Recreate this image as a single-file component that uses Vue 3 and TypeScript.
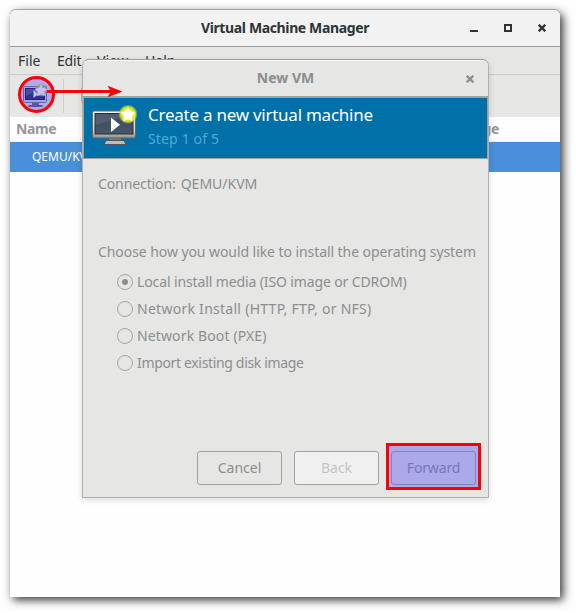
<script setup lang="ts">
interface Option {
  label: string
  cls: string
}

const menus: string[] = ['File', 'Edit', 'View', 'Help']
const options: Option[] = [
  { label: 'Local install media (ISO image or CDROM)', cls: 'local' },
  { label: 'Network Install (HTTP, FTP, or NFS)', cls: 'net' },
  { label: 'Network Boot (PXE)', cls: 'pxe' },
  { label: 'Import existing disk image', cls: 'import' },
]
const selected = 0
</script>

<template>
  <div class="page">
    <main class="window">
      <header class="titlebar">
        <h1>Virtual Machine Manager</h1>
        <div class="controls">
          <svg width="8" height="8" viewBox="0 0 8 8"><path d="M0 6h8v2H0z" fill="#2e3436" /></svg>
          <svg width="8" height="8" viewBox="0 0 8 8"><path d="M1 1h6v6H1z" fill="none" stroke="#2e3436" stroke-width="2" /></svg>
          <svg width="8" height="8" viewBox="0 0 8 8"><path d="M.7.7l6.6 6.6M7.3.7L.7 7.3" stroke="#2e3436" stroke-width="2.3" /></svg>
        </div>
      </header>
      <nav class="menubar">
        <span v-for="m in menus" :key="m" :class="m.toLowerCase()">{{ m }}</span>
      </nav>
      <div class="toolbar">
        <span class="sep"></span>
        <span class="tool-edge"></span>
      </div>
      <div class="columns"><span class="name">Name</span><span class="usage">CPU usage</span></div>
      <div class="row">QEMU/KVM</div>
    </main>

    <section class="dialog">
      <header class="dialog-title">
        <h2>New VM</h2>
        <svg width="8" height="8" viewBox="0 0 8 8"><path d="M.7.7l6.6 6.6M7.3.7L.7 7.3" stroke="#8b8e8f" stroke-width="2.3" /></svg>
      </header>
      <div class="banner">
        <svg class="monitor" width="54" height="48" viewBox="0 0 54 48">
          <defs>
            <linearGradient id="frame" x1="0" y1="0" x2="0" y2="1">
              <stop offset="0" stop-color="#f4f4f4" /><stop offset=".75" stop-color="#d2d2d0" /><stop offset="1" stop-color="#8c8c8a" />
            </linearGradient>
            <linearGradient id="screen" x1="0" y1="0" x2="0" y2="1">
              <stop offset="0" stop-color="#3d4a5c" /><stop offset="1" stop-color="#48566a" />
            </linearGradient>
            <radialGradient id="glow">
              <stop offset=".5" stop-color="#f4fb20" /><stop offset=".78" stop-color="#d8e820" stop-opacity=".85" /><stop offset="1" stop-color="#b0d040" stop-opacity="0" />
            </radialGradient>
          </defs>
          <path d="M17 35h12v4H17z" fill="#777" />
          <path d="M14 38.500h18l2 4H12z" fill="#bdbdbb" stroke="#555" stroke-width="1" />
          <rect x=".5" y="9" width="43" height="27" rx="1.8" fill="url(#frame)" stroke="#666" />
          <rect x="3" y="11.5" width="38" height="20.5" fill="url(#screen)" stroke="#242c38" />
          <path d="M3.5 12h37l-37 11z" fill="#8792a2" opacity=".25" />
          <path d="M19 15.500v14.500l9-7.200z" fill="#fff" />
          <circle cx="36" cy="12.3" r="9.8" fill="url(#glow)" />
          <path d="M36 5.800l2.100 4.200 4.700.7-3.400 3.300.8 4.700-4.200-2.200-4.200 2.200.8-4.700-3.400-3.300 4.700-.7z" fill="#fff" stroke="#fff" stroke-linejoin="round" />
        </svg>
        <div class="heading">
          <strong>Create a new virtual machine</strong>
          <span>Step 1 of 5</span>
        </div>
      </div>
      <div class="body">
        <div class="connection"><span>Connection:</span><span class="conn">QEMU/KVM</span></div>
        <p class="question">Choose how you would like to install the operating system</p>
        <div class="options">
          <label v-for="(o, i) in options" :key="o.cls" :class="o.cls">
            <i :class="{ on: i === selected }"></i>{{ o.label }}
          </label>
        </div>
      </div>
      <footer class="actions">
        <button>Cancel</button>
        <button class="disabled">Back</button>
        <button class="forward">Forward</button>
      </footer>
    </section>

    <div class="highlight"></div>
    <svg class="pointer" width="106" height="40" viewBox="0 0 106 40">
      <circle cx="18.5" cy="19.4" r="17" fill="#aeabea" stroke="#f00" stroke-width="3" />
      <rect x="5.5" y="11.5" width="23" height="16" rx="1" fill="#a3a2e0" stroke="#6664ae" />
      <rect x="7.5" y="13.5" width="19" height="11" fill="#2f3190" stroke="#24247c" />
      <path d="M8 14h14L8 21z" fill="#5555ae" opacity=".7" />
      <path d="M15.500 15v8l5-4z" fill="#c4c3fa" />
      <path d="M14 28h7v2h3.500v2h-14v-2H14z" fill="#5654a4" />
      <circle cx="23" cy="15.300" r="6" fill="#9a986f" opacity=".75" />
      <path d="M23 10.200l1.700 3.300 3.700.6-2.600 2.700.6 3.700-3.400-1.700-3.400 1.700.6-3.700-2.600-2.700 3.700-.6z" fill="#c3c1fb" stroke="#c3c1fb" />
      <path d="M29 16.500h66" stroke="#f00" stroke-width="3" />
      <path d="M104.500 16.500L89.500 10.800l3.500 5.700-3.500 5.700z" fill="#f00" />
    </svg>
  </div>
</template>

<style>
body {
  background: #fefefe;
}
</style>

<style scoped>
.page {
  position: relative;
  box-sizing: border-box;
  width: 576px;
  height: 613px;
  padding: 10px;
  overflow: hidden;
  font: 14px/20px "Noto Sans", "Open Sans", sans-serif;
  color: #2e3436;
}
.window {
  display: flex;
  flex-direction: column;
  width: 550px;
  height: 587px;
  background: #fefefe;
  border-radius: 6px 6px 0 0;
  box-shadow: 0 -1px 0 #a2a2a2, 3px 3px 10px rgba(0, 0, 0, 0.8);
}
.titlebar {
  display: flex;
  position: relative;
  align-items: center;
  justify-content: center;
  box-sizing: border-box;
  height: 37px;
  border-bottom: 1px solid #9b9b97;
  border-radius: 6px 6px 0 0;
  background: #f2f2f2;
}
h1,
h2 {
  margin: 0;
  font-size: 14px;
  font-weight: 700;
}
h1 {
  letter-spacing: -0.37px;
}
.controls {
  position: absolute;
  right: 14px;
  display: flex;
  gap: 26px;
}
.menubar {
  display: flex;
  box-sizing: border-box;
  height: 28px;
  padding: 4px 8px 0;
  background: #e6e6e4;
  border-bottom: 1px solid #cbcbc8;
}
.file { width: 39px; }
.edit { width: 40px; letter-spacing: -0.2px; }
.view { width: 48px; letter-spacing: 0.2px; }
.toolbar {
  display: flex;
  height: 42px;
  padding-left: 53px;
  background: #e6e6e4;
}
.sep {
  width: 1px;
  height: 34px;
  margin-top: 4px;
  background: #cecfcc;
}
.tool-edge {
  width: 8px;
  height: 16px;
  margin: 12px 0 0 17px;
  border-radius: 2px;
  background: #b5b5b2;
}
.columns {
  display: flex;
  box-sizing: border-box;
  height: 25px;
  padding: 2px 61px 0 6px;
  justify-content: space-between;
  border-bottom: 1px solid #eee;
  color: #949796;
  font-weight: 700;
  letter-spacing: -0.35px;
}
.row {
  height: 30px;
  padding-left: 22px;
  color: #fff;
  background: #4a8fd9;
  font-size: 12px;
  line-height: 30px;
}
.dialog {
  position: absolute;
  left: 82px;
  top: 59px;
  display: flex;
  flex-direction: column;
  box-sizing: border-box;
  width: 407px;
  height: 439px;
  border: 1px solid #aeb0b0;
  border-top-color: #9b9c9a;
  border-radius: 7px 7px 0 0;
  background: #e6e6e4;
  box-shadow: 0 2px 6px rgba(0, 0, 0, 0.14);
  color: #8b8e8f;
}
.dialog-title {
  display: flex;
  position: relative;
  align-items: center;
  justify-content: center;
  box-sizing: border-box;
  height: 38px;
  border-top: 1px solid #fafafa;
  border-bottom: 2px solid #a1a19e;
  border-radius: 6px 6px 0 0;
}
.dialog-title h2 {
  margin: 0 0 2px;
}
.dialog-title svg {
  position: absolute;
  right: 14px;
}
.banner {
  display: flex;
  box-sizing: border-box;
  height: 61px;
  border: 1px solid #a1a19e;
  border-top: 0;
  background: #0071a8;
}
.monitor {
  margin: 4px 0 0 8px;
}
.heading {
  display: flex;
  flex-direction: column;
  margin-left: 2px;
}
.heading strong {
  height: 24px;
  margin-top: 5px;
  color: #fff;
  font-size: 17px;
  font-weight: 400;
  line-height: 24px;
  letter-spacing: -0.25px;
}
.heading span {
  margin-top: 2px;
  color: #4fa7dc;
  letter-spacing: 0.15px;
}
.body {
  flex: 1;
  padding: 15px 0 0 15px;
  white-space: nowrap;
}
.connection {
  display: flex;
  gap: 5px;
  letter-spacing: -0.1px;
}
.conn {
  letter-spacing: 0;
}
.question {
  margin: 48px 0 0;
  letter-spacing: -0.07px;
}
.options {
  display: flex;
  flex-direction: column;
  gap: 7px;
  padding: 10px 0 0 19px;
}
.options label {
  display: flex;
  align-items: center;
}
.options i {
  display: flex;
  align-items: center;
  justify-content: center;
  box-sizing: border-box;
  width: 16px;
  height: 16px;
  margin-right: 4px;
  border: 1px solid #a5a6a3;
  border-radius: 50%;
}
.options i.on::after {
  content: "";
  width: 6px;
  height: 6px;
  border-radius: 50%;
  background: #8b8e8f;
}
.local { letter-spacing: -0.12px; }
.net { letter-spacing: 0.27px; }
.pxe { letter-spacing: 0.13px; }
.import { letter-spacing: -0.34px; }
.actions {
  display: flex;
  justify-content: flex-end;
  gap: 12px;
  padding: 0 12px 12px;
}
button {
  box-sizing: border-box;
  width: 85px;
  height: 34px;
  padding: 0;
  border: 1px solid #a1a19e;
  border-radius: 3px;
  background: transparent;
  color: inherit;
  font: inherit;
}
button.disabled {
  background: #f0f0f0;
  color: #c4c5c2;
}
button.forward {
  letter-spacing: -0.15px;
}
.highlight {
  position: absolute;
  left: 386px;
  top: 443px;
  box-sizing: border-box;
  width: 95px;
  height: 47px;
  border: 3px solid #f00;
  background: rgba(91, 86, 240, 0.42);
}
.pointer {
  position: absolute;
  left: 18px;
  top: 75px;
}
</style>
